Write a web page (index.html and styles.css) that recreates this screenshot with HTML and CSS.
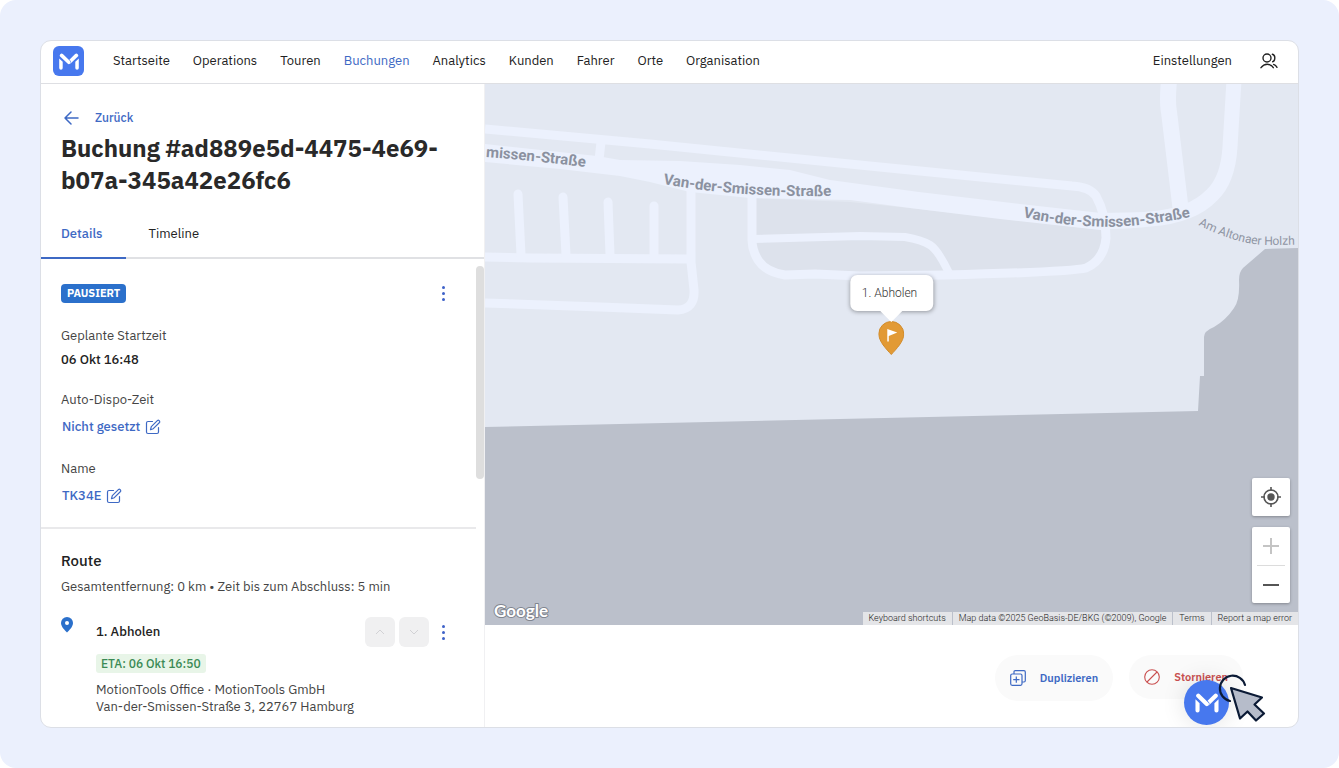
FILE: index.html
```html
<!DOCTYPE html>
<html lang="de">
<head>
<meta charset="utf-8">
<meta name="viewport" content="width=device-width, initial-scale=1">
<title>Buchung</title>
<link rel="stylesheet" href="styles.css">
</head>
<body>
<svg width="0" height="0" class="defs" aria-hidden="true">
  <symbol id="logo-m" viewBox="0 0 20 17">
    <path fill="#fff" d="M.2 5.400L3.700 8.700V14.900A1.750 1.750 0 0 1 .2 14.900ZM19.800 5.400L16.300 8.700V14.900A1.750 1.750 0 0 0 19.800 14.900Z"/>
    <g fill="none" stroke="#fff" stroke-width="3.600" stroke-linecap="round">
      <path d="M17.400 2.400L10.600 9"/>
      <path d="M2.600 2.400L9.600 9.200" stroke="#4778ee" stroke-width="4.800"/>
      <path d="M2.600 2.400L9.800 9.300"/>
    </g>
  </symbol>
  <symbol id="edit" viewBox="0 0 16 16">
    <g fill="none" stroke="currentColor" stroke-width="1.2" stroke-linejoin="round" stroke-linecap="round">
      <path d="M7.500 2.500H3A1.500 1.500 0 0 0 1.500 4v9A1.500 1.500 0 0 0 3 14.500H12A1.500 1.500 0 0 0 13.500 13V8.500"/>
      <path d="M5.500 10.700L6.300 7.700L12.600 1.400Q13.300 .9 14.100 1.600L14.500 2Q15.100 2.800 14.500 3.500L8.300 9.700Z"/>
    </g>
  </symbol>
</svg>

<div class="stage">
  <div class="window">
    <header class="topbar">
      <a class="logo" href="#" aria-label="MotionTools"><svg width="20" height="17"><use href="#logo-m"/></svg></a>
      <nav class="nav">
        <a href="#">Startseite</a>
        <a href="#">Operations</a>
        <a href="#">Touren</a>
        <a href="#" class="active">Buchungen</a>
        <a href="#">Analytics</a>
        <a href="#">Kunden</a>
        <a href="#">Fahrer</a>
        <a href="#">Orte</a>
        <a href="#">Organisation</a>
      </nav>
      <a class="settings" href="#">Einstellungen</a>
      <button class="users" aria-label="Benutzer">
        <svg width="18" height="16" viewBox="0 0 18 16" fill="none" stroke="#222" stroke-width="1.400" stroke-linecap="round">
          <circle cx="7" cy="5" r="4"/>
          <path d="M1 14.700Q3.500 11.200 7.200 11.200T13.300 14.700M12.400 1.300Q15 2 14.800 5.200T12.600 8.700M13.600 11.400Q15.800 12.300 17 14.300"/>
        </svg>
      </button>
    </header>

    <main class="content">
      <section class="panel">
        <div class="panel-head">
          <a class="back" href="#">
            <svg width="15" height="14" viewBox="0 0 15 14" fill="none" stroke="currentColor" stroke-width="1.500" stroke-linecap="round" stroke-linejoin="round"><path d="M14 7H1M7 1L1 7L7 13"/></svg>
            Zurück
          </a>
          <h1>Buchung #ad889e5d-4475-4e69-b07a-345a42e26fc6</h1>
        </div>
        <div class="tabs">
          <button class="tab selected">Details</button>
          <button class="tab">Timeline</button>
        </div>
        <div class="scroller">
          <div class="sections">
            <section class="details">
              <div class="row">
                <span class="badge">PAUSIERT</span>
                <button class="dots" aria-label="Mehr"><i></i><i></i><i></i></button>
              </div>
              <dl>
                <dt>Geplante Startzeit</dt>
                <dd class="value">06 Okt 16:48</dd>
                <dt>Auto-Dispo-Zeit</dt>
                <dd><button class="edit">Nicht gesetzt <svg width="16" height="16"><use href="#edit"/></svg></button></dd>
                <dt>Name</dt>
                <dd><button class="edit">TK34E <svg width="16" height="16"><use href="#edit"/></svg></button></dd>
              </dl>
            </section>
            <section class="route">
              <h2>Route</h2>
              <p class="summary">Gesamtentfernung: 0 km • Zeit bis zum Abschluss: 5 min</p>
              <div class="stop">
                <svg class="stop-pin" width="12" height="16" viewBox="0 0 12 16"><path d="M6 0A6 6 0 0 0 0 6C0 9.500 3.500 13 6 15.500C8.500 13 12 9.500 12 6A6 6 0 0 0 6 0Z" fill="#2b70cb"/><circle cx="6" cy="6" r="2" fill="#fff"/></svg>
                <div class="stop-body">
                  <div class="row">
                    <h3>1. Abholen</h3>
                    <div class="actions">
                      <button class="move" aria-label="Nach oben" disabled><svg width="10" height="6" viewBox="0 0 10 6"><path d="M1 5L5 1L9 5"/></svg></button>
                      <button class="move" aria-label="Nach unten" disabled><svg width="10" height="6" viewBox="0 0 10 6"><path d="M1 1L5 5L9 1"/></svg></button>
                      <button class="dots" aria-label="Mehr"><i></i><i></i><i></i></button>
                    </div>
                  </div>
                  <span class="eta">ETA: 06 Okt 16:50</span>
                  <p class="address">MotionTools Office · MotionTools GmbH<br>Van-der-Smissen-Straße 3, 22767 Hamburg</p>
                </div>
              </div>
            </section>
          </div>
          <div class="track"><div class="thumb"></div></div>
        </div>
      </section>

      <section class="main">
        <div class="map">
          <svg class="map-art" viewBox="485 84 813 541" preserveAspectRatio="xMidYMid slice" aria-hidden="true">
            <rect x="485" y="84" width="813" height="541" fill="#e3e8f2"/>
            <path fill="#dde2ec" d="M752 198L850 202L910 208L1101 230L1106 238Q1104 260 1086 268L945 275L782 276Q752 268 752 240Z"/>
            <g fill="none" stroke="#ecf1fd" stroke-linejoin="round">
              <path stroke-width="9" d="M485 129L650 144L910 170L1072 186Q1090 187 1096 196Q1106 214 1106 238Q1104 260 1086 268Q1070 272 945 275L860 276L815 274L785 275Q766 272 758 260Q752 250 752 240V190"/>
              <path stroke-width="8" d="M752 239L860 236L905 237Q922 240 930 245Q938 250 949 273"/>
              <path stroke-width="9" d="M601 142L599 160M485 257L530 258L690 259M691 185V262L694 290Q695 309 678 310L600 307L485 303"/>
              <path stroke-width="9" stroke-linecap="round" d="M518 194L521 255M563 197L566 255M608 202L610 255M654 206V255"/>
              <path stroke-width="16" d="M1169 80Q1167 102 1169 112L1181 212"/>
              <path stroke-width="15" d="M1234 80L1230 147Q1228 180 1212 195Q1192 216 1150 219Q1125 222 1095 221"/>
            </g>
            <path fill="#ecf1fd" d="M485 144L597 156L620 160L680 161L740 165L790 170L830 180L919 192L1020 204L1101 213L1150 212V225L1101 230L1000 219L910 208L850 200L750 198L690 192L650 182L620 176L560 169L485 162Z"/>
            <path fill="#bbc0cb" d="M1298 248L1265 249L1243 268Q1239 272 1239 280Q1240 300 1234 308Q1226 320 1214 327Q1204 331 1204 337V376H1200L1198 411L485 427V625H1298Z"/>
            <path id="street-1" fill="none" d="M486 157Q540 161 600 169"/>
            <path id="street-2" fill="none" d="M663 184L695 189Q770 199 860 195"/>
            <path id="street-3" fill="none" d="M1023 217Q1060 226 1110 227Q1150 226 1210 213"/>
            <path id="street-4" fill="none" d="M1198 225Q1242 247 1275 245L1330 244"/>
            <g class="street">
              <text><textPath href="#street-1">missen-Straße</textPath></text>
              <text><textPath href="#street-2">Van-der-Smissen-Straße</textPath></text>
              <text><textPath href="#street-3">Van-der-Smissen-Straße</textPath></text>
            </g>
            <text class="street-minor"><textPath href="#street-4">Am Altonaer Holzh</textPath></text>
          </svg>

          <div class="marker">
            <div class="bubble">1. Abholen</div>
            <svg width="26" height="34" viewBox="0 0 26 34"><path d="M13 .5A12.500 12.500 0 0 0 .5 13C.5 20.500 8 28 13 33.500C18 28 25.500 20.500 25.500 13A12.500 12.500 0 0 0 13 .5Z" fill="#e29a35" stroke="#d18b2b"/><path d="M9 8V20.500H10.500V15L19 11.500L9 8Z" fill="#fff"/></svg>
          </div>

          <svg class="google" width="62" height="26" role="img" aria-label="Google"><text x="4" y="18">Google</text></svg>

          <div class="controls">
            <button class="locate" aria-label="Mein Standort">
              <svg width="20" height="20" viewBox="0 0 20 20" fill="none" stroke="#555" stroke-width="1.600"><circle cx="10" cy="10" r="7"/><circle cx="10" cy="10" r="3.700" fill="#555" stroke="none"/><path d="M10 0V4M10 16V20M0 10H4M16 10H20"/></svg>
            </button>
            <div class="zoom">
              <button aria-label="Vergrößern"><svg width="16" height="16" viewBox="0 0 16 16"><path d="M8 0V16M0 8H16" stroke="#c4c4c4" stroke-width="2"/></svg></button>
              <button aria-label="Verkleinern"><svg width="16" height="16" viewBox="0 0 16 16"><path d="M0 8H16" stroke="#555" stroke-width="2"/></svg></button>
            </div>
          </div>

          <div class="legal">
            <button>Keyboard shortcuts</button>
            <span>Map data ©2025 GeoBasis-DE/BKG (©2009), Google</span>
            <a href="#">Terms</a>
            <a href="#">Report a map error</a>
          </div>
        </div>

        <footer class="footer">
          <button class="pill duplicate">
            <svg width="16" height="16" viewBox="0 0 16 16" fill="none" stroke="currentColor" stroke-width="1.200" stroke-linejoin="round"><path d="M4 4V1.800Q4 .7 5.200 .7H14Q15.300 .7 15.300 2V10.500Q15.300 12 14 12H12"/><rect x=".7" y="4" width="11.300" height="11.300" rx="1.500"/><path d="M6.300 6.500V12.800M3.200 9.700H9.500"/></svg>
            Duplizieren
          </button>
          <button class="pill cancel">
            <svg width="16" height="16" viewBox="0 0 16 16" fill="none" stroke="currentColor" stroke-width="1.100"><circle cx="8" cy="8" r="7.300"/><path d="M3 13L13 3"/></svg>
            Stornieren
          </button>
          <button class="fab" aria-label="Hilfe"><svg width="24" height="20"><use href="#logo-m"/></svg></button>
          <svg class="cursor" width="50" height="50" viewBox="0 0 50 50" fill="none" stroke="#0b1a35" stroke-width="2.200" stroke-linecap="round" stroke-linejoin="round" aria-hidden="true">
            <path d="M12 27A12.800 12.800 0 1 1 27 11"/>
            <path fill="#b6bcca" d="M13 14L44 23.500L36.500 30.500L46 39.500L38 46.500L29.500 37.500L22 44.500Z"/>
          </svg>
        </footer>
      </section>
    </main>
  </div>
</div>
</body>
</html>
```

FILE: styles.css
```css
* { box-sizing: border-box; }

body {
  margin: 0;
  background: #fff;
  color: #222;
  font-family: "IBM Plex Sans", Roboto, "Liberation Sans", sans-serif;
  font-size: 13px;
  line-height: 16px;
}

h1, h2, h3, p, dl, dd { margin: 0; }
a { color: inherit; text-decoration: none; }
button { font: inherit; color: inherit; background: none; border: 0; padding: 0; cursor: pointer; }
svg { display: block; }
.defs { position: absolute; }

.stage {
  display: flex;
  height: 100vh;
  min-height: 640px;
  padding: 40px;
  background: #ebf0fd;
  border-radius: 16px;
}

.window {
  flex: 1;
  min-width: 0;
  display: flex;
  flex-direction: column;
  background: #fff;
  border: 1px solid #dcdfe6;
  border-radius: 11px;
  overflow: hidden;
}

.topbar {
  display: flex;
  align-items: center;
  height: 43px;
  padding: 0 20px 2px 12px;
  border-bottom: 1px solid #dedfe3;
}
.logo {
  display: grid;
  place-items: center;
  width: 31px;
  height: 30px;
  margin-right: 29px;
  border-radius: 6px;
  background: #4778ee;
}
.nav { display: flex; gap: 23px; }
.nav .active { color: #3e69c4; }
.settings { margin-left: auto; margin-right: 28px; }

.content {
  flex: 1;
  min-height: 0;
  display: grid;
  grid-template-columns: 444px 1fr;
}

.panel {
  display: flex;
  flex-direction: column;
  min-height: 0;
  border-right: 1px solid #f0f0f2;
}
.panel-head { padding: 26px 20px 0; }
.back {
  display: flex;
  align-items: center;
  gap: 16px;
  padding-left: 3px;
  font-size: 12px;
  font-weight: 500;
  color: #3e69c4;
}
h1 {
  margin-top: 6px;
  font-size: 24px;
  line-height: 32px;
  font-weight: 700;
  color: #292929;
}
.tabs {
  display: flex;
  margin-top: 12px;
  border-bottom: 2px solid #e0e1e4;
}
.tab {
  height: 51px;
  margin-bottom: -2px;
  padding: 2px 23px 0;
  border-bottom: 2px solid transparent;
}
.tab.selected {
  padding-left: 20px;
  font-weight: 500;
  color: #3e69c4;
  border-color: #3e69c4;
}

.scroller {
  flex: 1;
  min-height: 0;
  display: grid;
  grid-template-columns: 1fr 8px;
}
.sections { min-height: 0; overflow: hidden; }
.track { padding-top: 7px; }
.thumb { height: 213px; border-radius: 4px; background: #dedede; }

.row { display: flex; align-items: center; justify-content: space-between; }
.details {
  padding: 25px 20px 21px;
  border-bottom: 2px solid #e9e9eb;
}
.badge {
  padding: 0 6px;
  border-radius: 4px;
  background: #2b70cb;
  color: #fff;
  font-size: 11px;
  line-height: 19px;
  font-weight: 700;
}
.dots { display: grid; gap: 3px; padding: 0 11px; }
.dots i { width: 3px; height: 3px; border-radius: 50%; background: #3e62c8; }

dl { padding-top: 1px; }
dt { color: #444; margin-top: 24px; }
dd { margin-top: 8px; }
.value { font-weight: 500; }
.edit {
  display: flex;
  align-items: center;
  gap: 5px;
  height: 21px;
  padding-left: 1px;
  font-weight: 500;
  color: #3e69c4;
}

.route { padding: 22px 20px 0; }
h2 { font-size: 15px; line-height: 20px; font-weight: 500; }
.summary { margin-top: 8px; color: #444; }
.stop {
  display: grid;
  grid-template-columns: 12px 1fr;
  gap: 23px;
  margin-top: 22px;
}
h3 { font-size: 13px; font-weight: 500; }
.actions { display: flex; align-items: center; gap: 4px; }
.actions .dots { padding: 0 11px 0 9px; }
.move {
  display: grid;
  place-items: center;
  width: 30px;
  height: 30px;
  border-radius: 6px;
  background: #f0f0f1;
}
.move svg { fill: none; stroke: #d2d2d5; }
.eta {
  display: inline-block;
  margin-top: 7px;
  padding: 0 5px;
  border-radius: 3px;
  background: #e8f5e8;
  color: #3b8a55;
  font-size: 12px;
  line-height: 19px;
  font-weight: 500;
}
.address { margin-top: 8px; line-height: 17px; color: #444; }

.main { display: flex; flex-direction: column; min-width: 0; }
.map { flex: 1; min-height: 0; position: relative; overflow: hidden; background: #e3e8f2; }
.map-art { position: absolute; inset: 0; width: 100%; height: 100%; }
.street { font: 700 15px Roboto, sans-serif; fill: #8b91a0; }
.street-minor { font: 400 12px Roboto, sans-serif; fill: #8f95a3; }

.marker {
  position: absolute;
  left: 50%;
  bottom: 50%;
  transform: translateX(-50%);
  display: flex;
  flex-direction: column;
  align-items: center;
  gap: 10px;
}
.bubble {
  position: relative;
  padding: 10px 16px 10px 12px;
  border-radius: 7px;
  background: #fff;
  box-shadow: 0 1px 4px rgba(0, 0, 0, .35);
  font: 300 12px/16px Roboto, sans-serif;
  color: #333;
}
.bubble::after {
  content: "";
  position: absolute;
  left: 50%;
  top: 100%;
  margin-left: -11px;
  border: 11px solid transparent;
  border-top-color: #fff;
  border-bottom: 0;
}

.google { position: absolute; left: 5px; bottom: 0; }
.google text {
  font: 700 17px Lato, sans-serif;
  fill: #fff;
  stroke: #80858f;
  stroke-width: 2px;
  stroke-linejoin: round;
  paint-order: stroke fill;
}

.controls {
  position: absolute;
  right: 8px;
  bottom: 22px;
  display: grid;
  gap: 11px;
}
.locate, .zoom { background: #fff; border-radius: 2px; box-shadow: 0 1px 3px rgba(0, 0, 0, .3); }
.controls button { display: grid; place-items: center; width: 38px; height: 38px; }
.zoom { display: grid; justify-items: center; }
.controls .zoom button + button { width: 28px; border-top: 1px solid #dcdcdc; }

.legal {
  position: absolute;
  right: 0;
  bottom: 0;
  display: flex;
  gap: 1px;
  font: 300 9px/13px Roboto, sans-serif;
  color: #222;
}
.legal > * { padding: 0 6px; background: #e4e5e8; }

.footer {
  position: relative;
  display: flex;
  justify-content: flex-end;
  align-items: flex-start;
  gap: 16px;
  height: 102px;
  padding: 30px 55px 0 0;
}
.pill {
  display: flex;
  align-items: center;
  gap: 14px;
  height: 46px;
  padding: 0 15px;
  border-radius: 23px;
  background: #fafafa;
  font-size: 11px;
  font-weight: 600;
}
.duplicate { color: #3e69c4; }
.cancel { color: #c94f4f; height: 44px; }
.fab {
  position: absolute;
  right: 69px;
  bottom: 2px;
  display: grid;
  place-items: center;
  width: 45px;
  height: 45px;
  border-radius: 50%;
  background: #4778ee;
  box-shadow: 0 0 24px rgba(0, 0, 0, .12);
}
.cursor { position: absolute; right: 30px; bottom: 3px; }
```
